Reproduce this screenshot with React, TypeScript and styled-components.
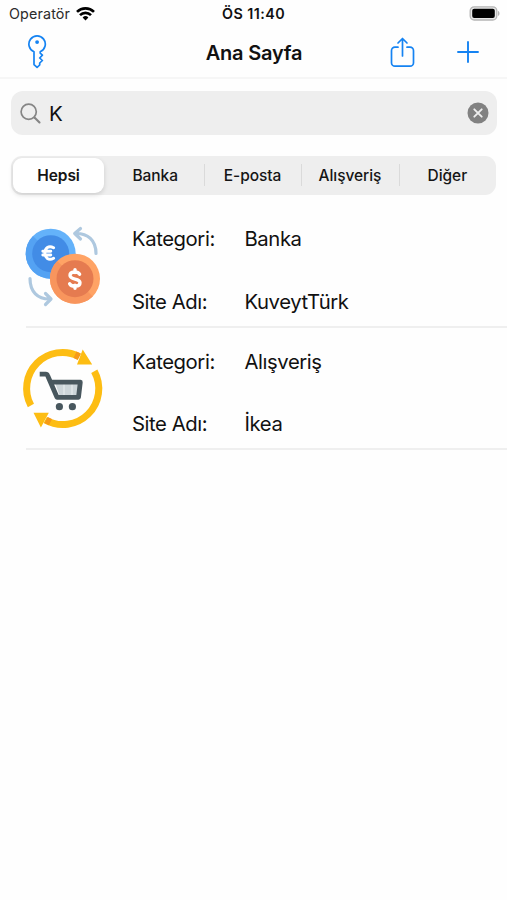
import React from "react";
import styled, { createGlobalStyle } from "styled-components";

const GlobalStyle = createGlobalStyle`
  *, *::before, *::after { box-sizing: border-box; }
  body { margin: 0; background: #fefefe; }
`;

const Screen = styled.main`
  width: 507px;
  height: 900px;
  overflow: hidden;
  background: #fefefe;
  color: #111;
  font-family: Inter, "Liberation Sans", sans-serif;
  svg { display: block; flex: none; }
`;

const StatusBar = styled.header`
  display: grid;
  grid-template-columns: 1fr auto 1fr;
  align-items: center;
  height: 27px;
  padding: 0 7px 0 9px;
`;

const Carrier = styled.div`
  display: flex;
  align-items: center;
  gap: 6px;
  font-size: 14.3px;
  letter-spacing: 0.15px;
  color: #2b2b2b;
`;

const Clock = styled.time`
  font-size: 14.3px;
  font-weight: 600;
  letter-spacing: 0.45px;
  margin-right: 2px;
`;

const BatterySlot = styled.div`
  display: flex;
  justify-content: flex-end;
`;

const NavBar = styled.nav`
  display: grid;
  grid-template-columns: 1fr auto 1fr;
  align-items: center;
  height: 52px;
  padding: 0 28px 0 27px;
  border-bottom: 2px solid #f6f6f6;
`;

const NavTitle = styled.h1`
  margin: 1px 0 0 2px;
  font-size: 20px;
  line-height: 24px;
  font-weight: 600;
  letter-spacing: -0.2px;
`;

const NavActions = styled.div<{ $end?: boolean }>`
  display: flex;
  align-items: center;
  justify-content: ${(p) => (p.$end ? "flex-end" : "flex-start")};
  gap: 42px;
`;

const IconButton = styled.button`
  display: block;
  padding: 0;
  border: 0;
  background: none;
  color: #1583f2;
`;

const SearchField = styled.div`
  display: flex;
  align-items: center;
  height: 44px;
  margin: 12px 10px 0 11px;
  padding: 0 8px 0 9px;
  border-radius: 12px;
  background: #eeeeee;
`;

const Query = styled.span`
  flex: 1;
  margin: 2px 0 0 8px;
  font-size: 20.5px;
  line-height: 24px;
`;

const Segments = styled.div`
  display: grid;
  grid-template-columns: 95.5px repeat(4, 1fr);
  height: 39px;
  margin: 21px 11px 0 11px;
  padding: 2px 0;
  border-radius: 11px;
  background: #eeeeee;
`;

const Segment = styled.button<{ $selected?: boolean; $divided?: boolean }>`
  display: flex;
  align-items: center;
  justify-content: center;
  position: relative;
  margin: 0 ${(p) => (p.$selected ? "2.5px 0 2px" : "0")};
  padding: 1px 0 0;
  border: 0;
  border-radius: 9px;
  background: ${(p) => (p.$selected ? "#fff" : "transparent")};
  box-shadow: ${(p) => (p.$selected ? "0 2px 5px rgba(0, 0, 0, 0.14)" : "none")};
  color: #151515;
  font: ${(p) => (p.$selected ? 600 : 500)} 15.5px/20px Inter, sans-serif;
  letter-spacing: -0.05px;
  &::after {
    content: "";
    display: ${(p) => (p.$divided ? "block" : "none")};
    position: absolute;
    right: -1px;
    top: 6px;
    bottom: 7px;
    width: 1px;
    background: #dadada;
  }
`;

const List = styled.ul`
  margin: 0;
  padding: 10px 0 0;
  list-style: none;
`;

const Entry = styled.li`
  display: grid;
  grid-template-columns: 106px 1fr;
  height: 122.5px;
  margin-left: 26px;
  border-bottom: 2px solid #efefef;
`;

const Artwork = styled.div`
  margin: 17px 0 0 -6px;
`;

const Fields = styled.dl`
  display: grid;
  grid-template-columns: 112.5px 1fr;
  grid-auto-rows: 24px;
  row-gap: 38.5px;
  margin: 0;
  padding-top: 22px;
  font-size: 20.3px;
  line-height: 24px;
  letter-spacing: -0.42px;
  dt, dd { margin: 0; white-space: nowrap; }
`;

const WifiIcon = () => (
  <svg width="19" height="14" viewBox="0 0 19 14" fill="none" stroke="#000" strokeWidth="2.7">
    <path d="M1 4.9a12.2 12.2 0 0 1 17 0M4 8.1a7.9 7.9 0 0 1 11 0" />
    <path d="M6.6 10.5a4.2 4.2 0 0 1 5.8 0L9.5 13.5z" fill="#000" stroke="none" />
  </svg>
);

const BatteryIcon = () => (
  <svg width="31" height="15" viewBox="0 0 31 15">
    <rect x="1.2" y=".8" width="26.6" height="13.2" rx="4" fill="#e8e8e8" stroke="#b5b5b5" strokeWidth="1.3" />
    <rect x="3.2" y="2.7" width="22.6" height="9.4" rx="2" fill="#000" />
    <path d="M29 5c2 .5 2 4.4 0 4.9z" fill="#b5b5b5" />
  </svg>
);

const KeyIcon = () => (
  <svg width="20" height="34" viewBox="0 0 20 34" fill="none" stroke="currentColor" strokeWidth="1.7" strokeLinejoin="round">
    <path d="M7 16.7A8.2 8.2 0 1 1 13.2 16.7V18.2l2.2 2-2.7 2.8 2.7 2.5-2.7 2.5v2l-2.6 2.4L7 29.6z" />
    <circle cx="10.1" cy="7.1" r="1.9" fill="currentColor" stroke="none" />
  </svg>
);

const ShareIcon = () => (
  <svg width="25" height="31" viewBox="0 0 25 31" fill="none" stroke="currentColor" strokeWidth="1.7" strokeLinecap="round" strokeLinejoin="round">
    <path d="M8 10.2H5a3.5 3.5 0 0 0-3.5 3.5v12A3.5 3.5 0 0 0 5 29.2h15a3.5 3.5 0 0 0 3.5-3.5v-12a3.5 3.5 0 0 0-3.5-3.5h-3" />
    <path d="M12.5 19V1.5M8 6l4.5-4.5L17 6" />
  </svg>
);

const PlusIcon = () => (
  <svg width="22" height="22" viewBox="0 0 22 22" stroke="currentColor" strokeWidth="1.9" strokeLinecap="round">
    <path d="M11 1v20M1 11h20" />
  </svg>
);

const SearchIcon = () => (
  <svg width="21" height="21" viewBox="0 0 21 21" fill="none" stroke="#858585" strokeWidth="1.7" strokeLinecap="round">
    <circle cx="8.7" cy="8.7" r="7.6" />
    <path d="m14.5 14.5 5 5" strokeWidth="2.1" />
  </svg>
);

const ClearIcon = () => (
  <svg width="22" height="22" viewBox="0 0 22 22">
    <circle cx="11" cy="11" r="10.5" fill="#818181" />
    <path d="m7.3 7.3 7.4 7.4m0-7.4-7.4 7.4" stroke="#eee" strokeWidth="1.9" strokeLinecap="round" />
  </svg>
);

const CurrencyArt = () => (
  <svg width="84" height="86" viewBox="0 0 84 86" fill="none">
    <g stroke="#aec8df" strokeWidth="3.2" strokeLinecap="round" strokeLinejoin="round">
      <path d="M55 11.5c13-.5 21 7 21 20M60.5 6.5l-5.8 5 5.8 5.5" />
      <path d="M10 56.5c0 13 7.5 21 20.5 20.5M25.5 71.5l5.5 5.5-5.5 5.5" />
    </g>
    <circle cx="30.7" cy="31.7" r="25" fill="#64b2fa" />
    <path d="M13 14a25 25 0 0 0 35.4 35.4z" fill="#54a2f3" />
    <circle cx="30.7" cy="31.7" r="18.5" fill="#428ce6" />
    <path d="M33.6 25.8c-5-2.8-8.7.4-8.7 5.2s3.7 8 8.7 5.2M22.8 29.3h8M22.8 33h8" stroke="#fff" strokeWidth="2.9" strokeLinecap="round" />
    <circle cx="55" cy="56.7" r="25" fill="#ffa365" />
    <path d="M37.3 39a25 25 0 0 0 35.4 35.4z" fill="#f8955d" />
    <circle cx="55" cy="56.7" r="18.5" fill="#e57b50" />
    <path d="M59.6 52.2c-2-3.2-9.6-3-9.6 1.1 0 5.2 10 2.3 10 7.4 0 4.5-8.5 4.3-10.3 1.1M55 47.6v3m0 12.7v3" stroke="#fff" strokeWidth="3.4" strokeLinecap="round" />
  </svg>
);

const CartArt = () => (
  <svg width="84" height="86" viewBox="0 0 84 86" fill="none">
    <g stroke="#fdbd13" strokeWidth="7">
      <path d="M10.9 60.5A36 36 0 0 1 59 11.4" />
      <path d="M74.3 26.2A36 36 0 0 1 25.2 75" />
    </g>
    <path d="m56.5 6.6 4.5 2.2-3.2 6.2-4.3-2zM29 80.3l-4.5-2.2 3.2-6.2 4.3 2z" fill="#f69a16" />
    <path d="m62.7 4.5 9.5 15H57zM20.9 82.5 13.5 67.8h15.3z" fill="#fdbd13" />
    <path d="M35 37.5h24.5l-2 13H39.5z" fill="#ccd5d9" />
    <path d="M44 37v13m8-13v13" stroke="#dbe2e5" strokeWidth="2" />
    <path d="M19.7 29.2h6.1q1.3 0 1.9 1.5l9.3 21.6h21.5L60.3 37.2H32" stroke="#48575e" strokeWidth="4.8" strokeLinejoin="round" />
    <circle cx="39.4" cy="61.7" r="3.6" fill="#48575e" />
    <circle cx="52.4" cy="61.7" r="3.6" fill="#48575e" />
  </svg>
);

const segments = ["Hepsi", "Banka", "E-posta", "Alışveriş", "Diğer"];

const entries = [
  { category: "Banka", site: "KuveytTürk", Art: CurrencyArt },
  { category: "Alışveriş", site: "İkea", Art: CartArt },
];

export default function App() {
  return (
    <Screen lang="tr">
      <GlobalStyle />
      <StatusBar>
        <Carrier>Operatör<WifiIcon /></Carrier>
        <Clock>ÖS 11:40</Clock>
        <BatterySlot><BatteryIcon /></BatterySlot>
      </StatusBar>
      <NavBar>
        <NavActions>
          <IconButton aria-label="Şifreler"><KeyIcon /></IconButton>
        </NavActions>
        <NavTitle>Ana Sayfa</NavTitle>
        <NavActions $end>
          <IconButton aria-label="Paylaş"><ShareIcon /></IconButton>
          <IconButton aria-label="Ekle"><PlusIcon /></IconButton>
        </NavActions>
      </NavBar>
      <SearchField>
        <SearchIcon />
        <Query>K</Query>
        <IconButton aria-label="Temizle"><ClearIcon /></IconButton>
      </SearchField>
      <Segments>
        {segments.map((label, i) => (
          <Segment key={label} $selected={i === 0} $divided={i > 0 && i < segments.length - 1}>
            {label}
          </Segment>
        ))}
      </Segments>
      <List>
        {entries.map(({ category, site, Art }) => (
          <Entry key={site}>
            <Artwork><Art /></Artwork>
            <Fields>
              <dt>Kategori:</dt>
              <dd>{category}</dd>
              <dt>Site Adı:</dt>
              <dd>{site}</dd>
            </Fields>
          </Entry>
        ))}
      </List>
    </Screen>
  );
}
